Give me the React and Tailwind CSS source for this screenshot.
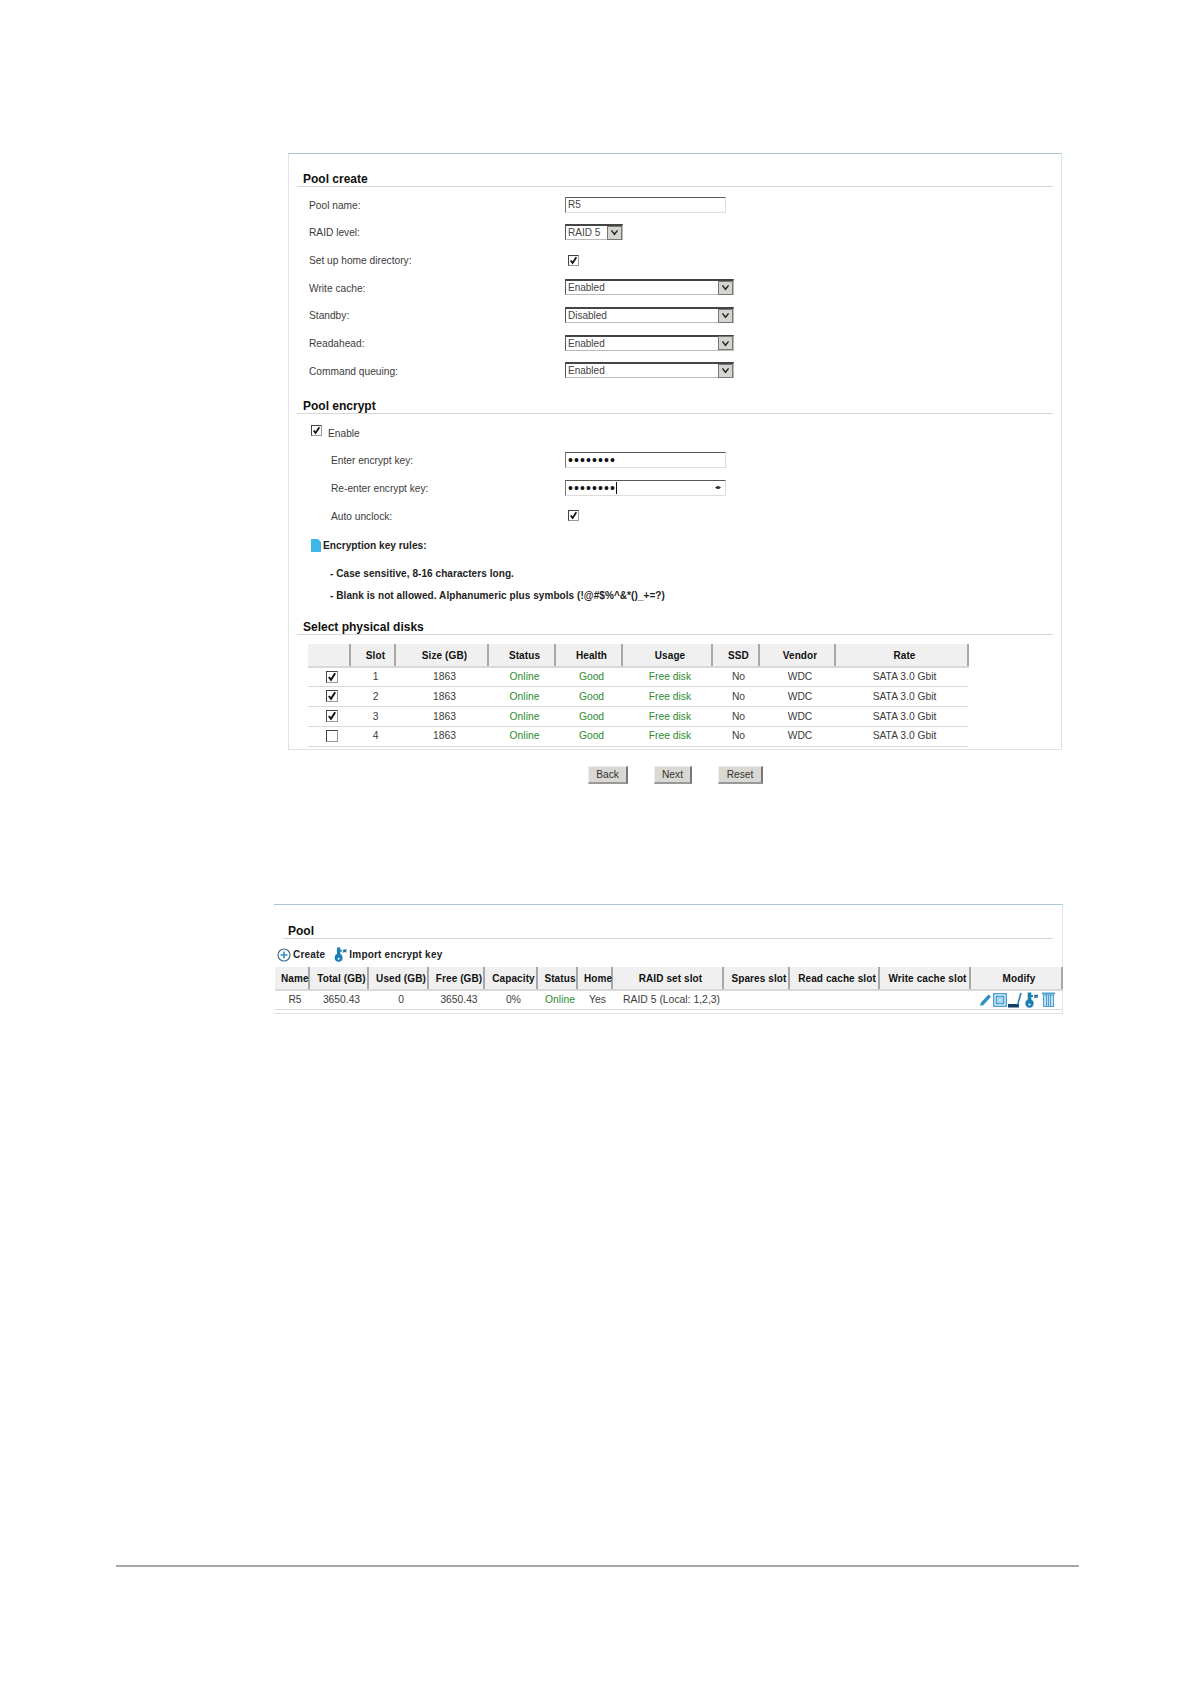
import React from 'react'

const FONT = "font-['Liberation_Sans',Arial,sans-serif]"

const DISKS = [1, 2, 3, 4]

function Check({ checked = true, size = 'w-[11px] h-[11px]' }) {
  return (
    <span className={`${size} inline-block border border-t-[#444] border-l-[#444] border-r-[#999] border-b-[#999] bg-white relative`}>
      {checked && (
        <svg viewBox="0 0 12 12" className="absolute inset-0 w-full h-full">
          <path d="M2.2 6 L4.8 9.4 L9.8 1.6" fill="none" stroke="#111" strokeWidth="2.3" />
        </svg>
      )}
    </span>
  )
}

function SectionTitle({ children }) {
  return (
    <div className="h-[16px] border-b border-[#d5d8da] text-[12px] leading-[17px] font-bold text-[#111] pl-[6px]">
      {children}
    </div>
  )
}

function Row({ label, indent, children }) {
  return (
    <div className="flex items-center h-[27.7px] text-[10.2px] text-[#3c3c3c]">
      <div className={`w-[268px] pt-[1px] ${indent ? 'pl-[34px]' : 'pl-[12px]'}`}>{label}</div>
      <div className="flex items-center">{children}</div>
    </div>
  )
}

function Field({ children }) {
  return (
    <div className="w-[161px] h-[16px] flex items-center pl-[2px] border border-t-[#555] border-l-[#777] border-r-[#ddd] border-b-[#ddd] bg-white text-[10px] text-[#444] relative">
      {children}
    </div>
  )
}

function Select({ value, small }) {
  return (
    <div className={`${small ? 'w-[58px]' : 'w-[169px]'} h-[16px] -mt-[1px] flex items-center justify-between border border-t-[#444] border-t-2 border-l-[#555] border-r-[#bbb] border-b-[#bbb] bg-white text-[10px] text-[#444] pl-[2px]`}>
      <span>{value}</span>
      <span className="w-[15px] h-[14px] flex items-center justify-center bg-[#d6d4ce] border border-[#777]">
        <svg viewBox="0 0 10 8" className="w-[9px] h-[7px]">
          <path d="M1.5 1.5 L5 6 L8.5 1.5" fill="none" stroke="#222" strokeWidth="1.6" />
        </svg>
      </span>
    </div>
  )
}

function Th({ children }) {
  return (
    <th className="p-0 pl-[6px] bg-[#f0f0f0] border-r-2 border-r-[#a8a8a8] border-b-2 border-b-[#d8d8d8] font-bold text-[10px] tracking-[0.1px] text-[#111] text-center whitespace-nowrap">
      {children}
    </th>
  )
}

function Td({ children, green }) {
  return (
    <td className={`p-0 pl-[6px] text-center text-[10.3px] whitespace-nowrap border-b border-b-[#d8d8d8] ${green ? 'text-[#2e8b2e]' : 'text-[#3c3c3c]'}`}>
      {children}
    </td>
  )
}

function Button({ label, width }) {
  return (
    <div className={`${width} h-[18px] flex items-center justify-center bg-[#d9d8d2] border-r-2 border-b-2 border-r-[#777] border-b-[#999] border-t border-l border-t-[#eee] border-l-[#eee] text-[10.2px] text-[#333]`}>
      {label}
    </div>
  )
}

function KeyIcon({ className }) {
  return (
    <svg viewBox="0 0 13 16" className={className}>
      <circle cx="4.5" cy="11.5" r="4.2" fill="#1b7fb5" />
      <circle cx="4.5" cy="12.5" r="1.1" fill="#fff" />
      <rect x="2.7" y="0.5" width="3.6" height="9" fill="#1b7fb5" />
      <rect x="6" y="3" width="2" height="2" fill="#1b7fb5" />
      <path d="M8.5 6.5 L9.5 4.5 L8.8 3 L13 2.5 L12.6 6 L11 5.4 Z" fill="#2a6f9e" />
    </svg>
  )
}

function PoolIcons() {
  return (
    <div className="flex items-center justify-end h-full pr-[7px]">
      <svg viewBox="0 0 13 14" className="w-[13px] h-[14px]">
        <path d="M1 13 L2 9.5 L9.5 1.5 L12 3.8 L4.5 12 Z" fill="#2f8fc4" />
      </svg>
      <svg viewBox="0 0 14 14" className="w-[14px] h-[14px] ml-[1px]">
        <rect x="0.5" y="0.5" width="13" height="13" fill="#a9d6ee" stroke="#4fa3d1" />
        <rect x="3.5" y="3.5" width="7" height="7" fill="none" stroke="#4fa3d1" />
        <rect x="5.5" y="5.5" width="3" height="3" fill="#d8eef9" stroke="#7fbfdf" strokeWidth="0.5" />
      </svg>
      <svg viewBox="0 0 14 16" className="w-[14px] h-[16px] ml-[1px]">
        <rect x="0" y="12" width="11" height="3.5" fill="#123f66" />
        <path d="M9.5 13 L13 1" fill="none" stroke="#2a7fb2" strokeWidth="1.6" />
      </svg>
      <KeyIcon className="w-[13px] h-[16px] ml-[3px]" />
      <svg viewBox="0 0 13 15" className="w-[13px] h-[15px] ml-[4px]">
        <rect x="0" y="0.5" width="13" height="2" fill="#4c9fd0" />
        <rect x="1.5" y="3" width="10" height="11.5" fill="#bfe0f2" stroke="#4c9fd0" />
        <path d="M4.5 3 V14.5 M6.5 3 V14.5 M8.5 3 V14.5" stroke="#4c9fd0" strokeWidth="1" />
      </svg>
    </div>
  )
}

export default function App() {
  return (
    <div className={`${FONT} bg-white w-[1191px] h-[1684px] overflow-hidden pt-[153px]`}>

      {/* Pool create panel */}
      <div className="ml-[288px] w-[774px] h-[597px] border border-[#dde3ea] border-t-[#a9c8da] pt-[17px] pl-[8px] pr-[8px]">
        <SectionTitle>Pool create</SectionTitle>
        <div className="mt-[4px]">
          <Row label="Pool name:"><Field>R5</Field></Row>
          <Row label="RAID level:"><Select small value="RAID 5" /></Row>
          <Row label="Set up home directory:"><span className="flex pl-[3px]"><Check /></span></Row>
          <Row label="Write cache:"><Select value="Enabled" /></Row>
          <Row label="Standby:"><Select value="Disabled" /></Row>
          <Row label="Readahead:"><Select value="Enabled" /></Row>
          <Row label="Command queuing:"><Select value="Enabled" /></Row>
        </div>

        <div className="mt-[13px]"><SectionTitle>Pool encrypt</SectionTitle></div>
        <div className="mt-[4px]">
          <div className="flex items-center h-[28.7px] pl-[14px] text-[10.2px] text-[#3c3c3c]">
            <span className="flex -mt-[3px]"><Check size="w-[11px] h-[11px]" /></span>
            <span className="ml-[6px] pt-[2px]">Enable</span>
          </div>
          <Row indent label="Enter encrypt key:">
            <Field><span className="text-[14px] tracking-[1.1px] leading-[12px] whitespace-nowrap text-[#111]">••••••••</span></Field>
          </Row>
          <Row indent label="Re-enter encrypt key:">
            <Field>
              <span className="text-[14px] tracking-[1.1px] text-[#111] border-r border-[#111] leading-[12px] whitespace-nowrap">••••••••</span>
              <svg viewBox="0 0 8 6" className="absolute right-[4px] top-[4px] w-[6px] h-[5px]">
                <path d="M0 3 Q4 -1 8 3 Q4 7 0 3 Z" fill="#333" />
              </svg>
            </Field>
          </Row>
          <Row indent label="Auto unclock:"><span className="flex pl-[3px]"><Check /></span></Row>
        </div>

        <div className="mt-[8px] h-[16px] flex items-center pl-[14px] text-[10.2px] font-bold text-[#222]">
          <svg viewBox="0 0 10 13" className="w-[10px] h-[13px] mr-[2px]">
            <path d="M0 0 H7 L10 3 V13 H0 Z" fill="#3cb7e6" />
          </svg>
          Encryption key rules:
        </div>
        <div className="mt-[12px] h-[16px] flex items-center pl-[33px] text-[10px] font-bold tracking-[0.07px] text-[#222]">
          - Case sensitive, 8-16 characters long.
        </div>
        <div className="mt-[6px] h-[16px] flex items-center pl-[33px] text-[10px] font-bold tracking-[0.07px] text-[#222]">
          - Blank is not allowed. Alphanumeric plus symbols (!@#$%^&amp;*()_+=?)
        </div>

        <div className="mt-[15px]"><SectionTitle>Select physical disks</SectionTitle></div>

        <table className="mt-[9px] ml-[11px] w-[660px] table-fixed [&_th]:pt-[2px]">
          <colgroup>
            <col className="w-[42px]" /><col className="w-[45px]" /><col className="w-[93px]" />
            <col className="w-[67px]" /><col className="w-[67px]" /><col className="w-[90px]" />
            <col className="w-[47px]" /><col className="w-[76px]" /><col className="w-[133px]" />
          </colgroup>
          <thead>
            <tr className="h-[23px]">
              <Th></Th><Th>Slot</Th><Th>Size (GB)</Th><Th>Status</Th><Th>Health</Th>
              <Th>Usage</Th><Th>SSD</Th><Th>Vendor</Th><Th>Rate</Th>
            </tr>
          </thead>
          <tbody>
            {DISKS.map(n => (
              <tr key={n} className="h-[19.9px]">
                <Td><span className="flex justify-center"><Check checked={n !== 4} size="w-[12px] h-[12px]" /></span></Td>
                <Td>{n}</Td>
                <Td>1863</Td>
                <Td green>Online</Td>
                <Td green>Good</Td>
                <Td green>Free disk</Td>
                <Td>No</Td>
                <Td>WDC</Td>
                <Td>SATA 3.0 Gbit</Td>
              </tr>
            ))}
          </tbody>
        </table>
      </div>

      <div className="mt-[16px] ml-[588px] flex gap-[26px]">
        <Button label="Back" width="w-[40px]" />
        <Button label="Next" width="w-[38px]" />
        <Button label="Reset" width="w-[45px]" />
      </div>

      {/* Pool list panel */}
      <div className="mt-[120px] ml-[274px] w-[789px] h-[110px] border border-[#dde3ea] border-t-[#a9c8da] border-l-0 pt-[18px]">
        <div className="mx-[9px] [&>div]:pl-[5px]"><SectionTitle>Pool</SectionTitle></div>
        <div className="h-[28px] pt-[3px] pl-[3px] flex items-center text-[10px] font-bold tracking-[0.2px] text-[#222]">
          <svg viewBox="0 0 14 14" className="w-[14px] h-[14px] mr-[2px]">
            <circle cx="7" cy="7" r="6" fill="#fff" stroke="#44708f" strokeWidth="1.2" />
            <path d="M7 3.5 V10.5 M3.5 7 H10.5" stroke="#2f8fc4" strokeWidth="1.6" />
          </svg>
          Create
          <KeyIcon className="w-[13px] h-[15px] ml-[9px] mr-[2px]" />
          Import encrypt key
        </div>
        <table className="ml-[1px] w-[787px] table-fixed">
          <colgroup>
            <col className="w-[34px]" /><col className="w-[59px]" /><col className="w-[60px]" />
            <col className="w-[56px]" /><col className="w-[53px]" /><col className="w-[40px]" />
            <col className="w-[35px]" /><col className="w-[111px]" /><col className="w-[66px]" />
            <col className="w-[90px]" /><col className="w-[91px]" /><col className="w-[92px]" />
          </colgroup>
          <thead>
            <tr className="h-[23px]">
              <Th>Name</Th><Th>Total (GB)</Th><Th>Used (GB)</Th><Th>Free (GB)</Th><Th>Capacity</Th>
              <Th>Status</Th><Th>Home</Th><Th>RAID set slot</Th><Th>Spares slot</Th>
              <Th>Read cache slot</Th><Th>Write cache slot</Th><Th>Modify</Th>
            </tr>
          </thead>
          <tbody>
            <tr className="h-[19px]">
              <Td>R5</Td><Td>3650.43</Td><Td>0</Td><Td>3650.43</Td><Td>0%</Td>
              <Td green>Online</Td><Td>Yes</Td>
              <td className="p-0 text-left pl-[11px] text-[10.4px] whitespace-nowrap text-[#3c3c3c] border-b border-b-[#d8d8d8]">RAID 5 (Local: 1,2,3)</td>
              <Td></Td><Td></Td><Td></Td>
              <td className="p-0 border-b border-b-[#d8d8d8]"><PoolIcons /></td>
            </tr>
          </tbody>
        </table>
      </div>

      {/* Page footer rule */}
      <div className="mt-[551px] ml-[116px] w-[963px] border-t-2 border-[#a8a8a8]"></div>
    </div>
  )
}
